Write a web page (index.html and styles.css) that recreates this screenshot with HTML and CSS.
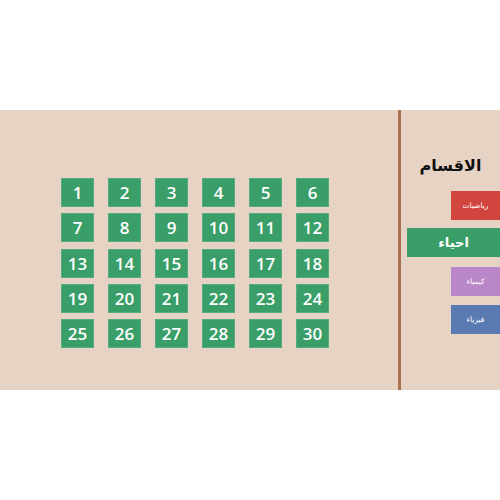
FILE: index.html
```html
<!DOCTYPE html>
<html lang="ar">
<head>
<meta charset="utf-8">
<link rel="stylesheet" href="styles.css">
</head>
<body>
<div class="panel">
  <div class="main">
    <div class="grid">
      <div class="tile">1</div><div class="tile">2</div><div class="tile">3</div><div class="tile">4</div><div class="tile">5</div><div class="tile">6</div>
      <div class="tile">7</div><div class="tile">8</div><div class="tile">9</div><div class="tile">10</div><div class="tile">11</div><div class="tile">12</div>
      <div class="tile">13</div><div class="tile">14</div><div class="tile">15</div><div class="tile">16</div><div class="tile">17</div><div class="tile">18</div>
      <div class="tile">19</div><div class="tile">20</div><div class="tile">21</div><div class="tile">22</div><div class="tile">23</div><div class="tile">24</div>
      <div class="tile">25</div><div class="tile">26</div><div class="tile">27</div><div class="tile">28</div><div class="tile">29</div><div class="tile">30</div>
    </div>
  </div>
  <div class="divider"></div>
  <div class="side" dir="rtl">
    <div class="title">الاقسام</div>
    <div class="cat red">رياضيات</div>
    <div class="cat green active">احياء</div>
    <div class="cat purple">كيمياء</div>
    <div class="cat blue">فيزياء</div>
  </div>
</div>
</body>
</html>
```
FILE: styles.css
```css
html, body {
  margin: 0;
  padding: 0;
  background: #ffffff;
}
body {
  font-family: "Open Sans", "DejaVu Sans", sans-serif;
}
.panel {
  margin-top: 110px;
  height: 280px;
  background: #e7d3c3;
  display: flex;
}
.main {
  width: 398px;
  padding-top: 68px;
  padding-left: 61px;
  box-sizing: border-box;
}
.grid {
  display: grid;
  grid-template-columns: repeat(6, 33px);
  grid-auto-rows: 29px;
  column-gap: 14px;
  row-gap: 6.25px;
}
.tile {
  background: #3a9e68;
  box-shadow: inset 0 0 0 1px #55ac7c;
  color: #ffffff;
  font-size: 17px;
  font-weight: 600;
  display: flex;
  align-items: center;
  justify-content: center;
  line-height: 1;
}
.divider {
  width: 3px;
  background: #a8704f;
}
.side {
  flex: 1;
  display: flex;
  flex-direction: column;
  align-items: flex-start;
  padding-top: 46px;
}
.title {
  align-self: center;
  font-family: "DejaVu Sans", sans-serif;
  font-weight: bold;
  font-size: 16px;
  line-height: 20px;
  height: 20px;
  color: #111111;
  margin-bottom: 15px;
}
.cat {
  width: 49px;
  height: 29px;
  display: flex;
  align-items: center;
  justify-content: center;
  color: #ffffff;
  font-family: "DejaVu Sans", sans-serif;
  font-size: 7.5px;
}
.red { background: #d2453e; margin-bottom: 8px; }
.green { background: #3a9e68; margin-bottom: 10px; }
.purple { background: #b986c8; margin-bottom: 9px; }
.blue { background: #5a7bb2; }
.active {
  width: 93px;
  font-size: 13px;
  font-weight: bold;
}
```
